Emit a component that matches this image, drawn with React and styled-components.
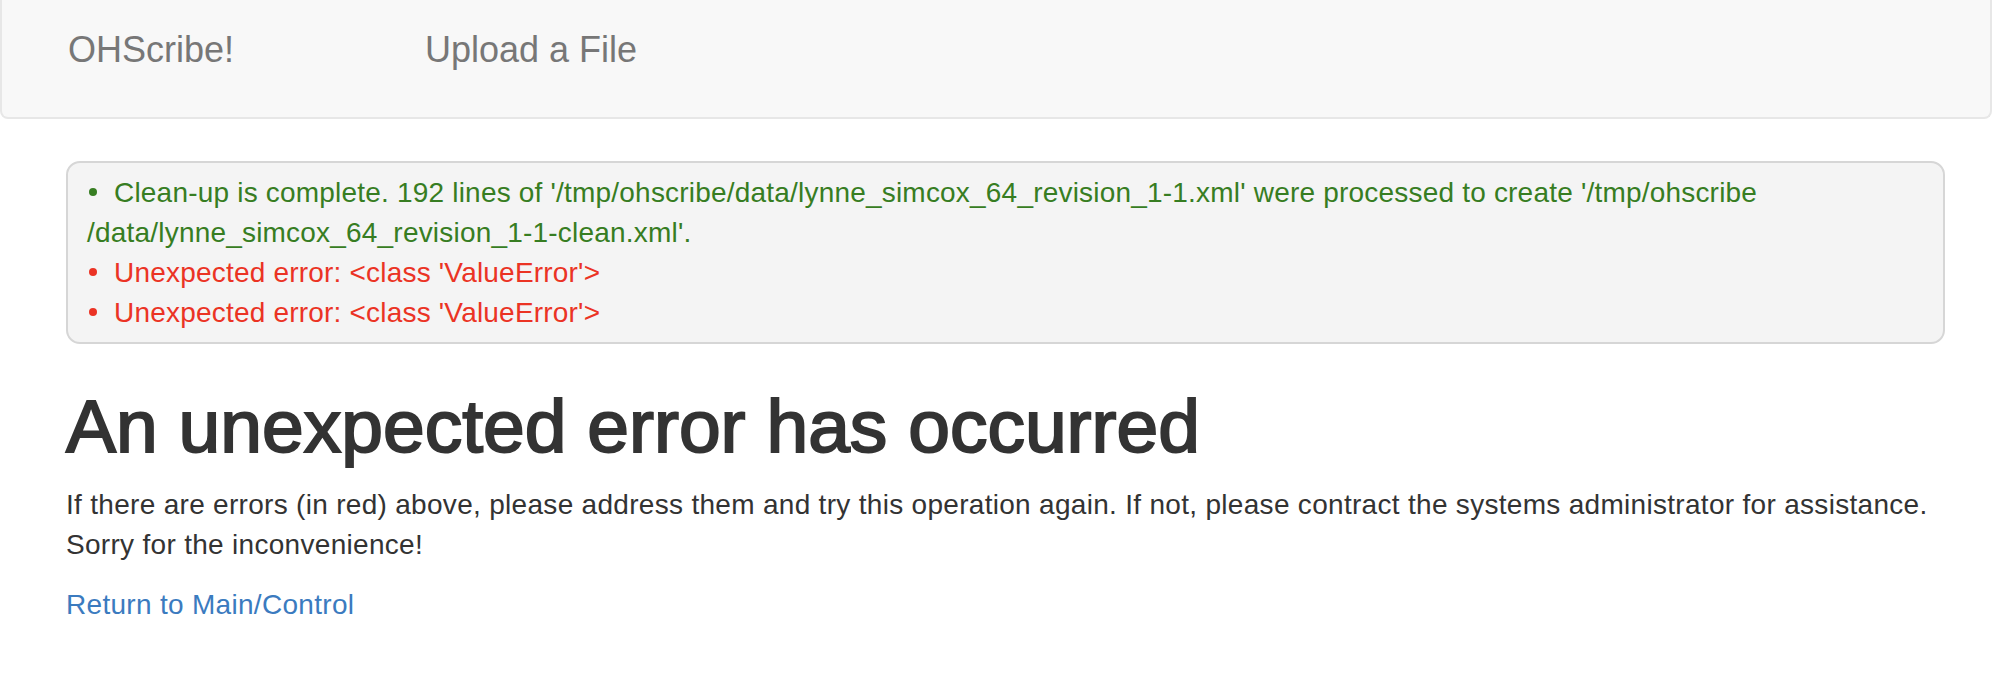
import React from "react";
import styled, { createGlobalStyle } from "styled-components";

const GlobalStyle = createGlobalStyle`
  html, body {
    margin: 0;
    padding: 0;
    background: #fff;
  }
  body {
    font-family: "Liberation Sans", Arial, Helvetica, sans-serif;
    font-size: 28px;
    line-height: 40px;
    color: #333;
  }
`;

const messages = [
  {
    kind: "success",
    text: (
      <>
        Clean-up is complete. 192 lines of
        '/tmp/ohscribe/data/lynne_simcox_64_revision_1-1.xml' were processed to
        create '/tmp/ohscribe
        <br />
        /data/lynne_simcox_64_revision_1-1-clean.xml'.
      </>
    ),
  },
  { kind: "error", text: "Unexpected error: <class 'ValueError'>" },
  { kind: "error", text: "Unexpected error: <class 'ValueError'>" },
];

function App() {
  return (
    <>
      <GlobalStyle />
      <Navbar>
        <Brand href="#">OHScribe!</Brand>
        <NavLink href="#">Upload a File</NavLink>
      </Navbar>
      <Container>
        <Flash>
          <MessageList>
            {messages.map((m, i) => (
              <Message key={i} kind={m.kind}>
                {m.text}
              </Message>
            ))}
          </MessageList>
        </Flash>
        <Title>An unexpected error has occurred</Title>
        <Text>
          If there are errors (in red) above, please address them and try this
          operation again. If not, please contract the systems administrator
          for assistance.
          <br />
          Sorry for the inconvenience!
        </Text>
        <Text>
          <Link href="#">Return to Main/Control</Link>
        </Text>
      </Container>
    </>
  );
}

const Navbar = styled.nav`
  display: flex;
  align-items: flex-start;
  box-sizing: border-box;
  height: 119px;
  padding: 30px 0 0 66px;
  background-color: #f8f8f8;
  border: 2px solid #e7e7e7;
  border-top: none;
  border-radius: 0 0 8px 8px;
  margin-bottom: 42px;
`;

const Brand = styled.a`
  width: 357px;
  font-size: 36px;
  line-height: 40px;
  color: #777;
  text-decoration: none;
`;

const NavLink = styled.a`
  font-size: 36px;
  line-height: 40px;
  color: #777;
  text-decoration: none;
`;

const Container = styled.main`
  padding: 0 47px 0 66px;
`;

const Flash = styled.div`
  box-sizing: border-box;
  padding: 10px 19px 9px;
  background-color: #f4f4f4;
  border: 2px solid #d6d6d6;
  border-radius: 14px;
  margin-bottom: 41px;
  letter-spacing: 0.2px;
`;

const MessageList = styled.ul`
  list-style: none;
  margin: 0;
  padding: 0;
`;

const Message = styled.li`
  color: ${(p) => (p.kind === "error" ? "#eb3324" : "#377d22")};

  &::before {
    content: "";
    display: inline-block;
    width: 8px;
    height: 8px;
    margin: 0 17px 0 2px;
    border-radius: 50%;
    background-color: currentColor;
    vertical-align: 6px;
  }
`;

const Title = styled.h1`
  margin: 0 0 17px;
  font-size: 75px;
  line-height: 1.1;
  font-weight: 500;
  color: #333;
  -webkit-text-stroke: 2px #333;
`;

const Text = styled.p`
  margin: 0 0 20px;
  letter-spacing: 0.3px;
`;

const Link = styled.a`
  color: #3b7bbf;
  text-decoration: none;
`;

export default App;
